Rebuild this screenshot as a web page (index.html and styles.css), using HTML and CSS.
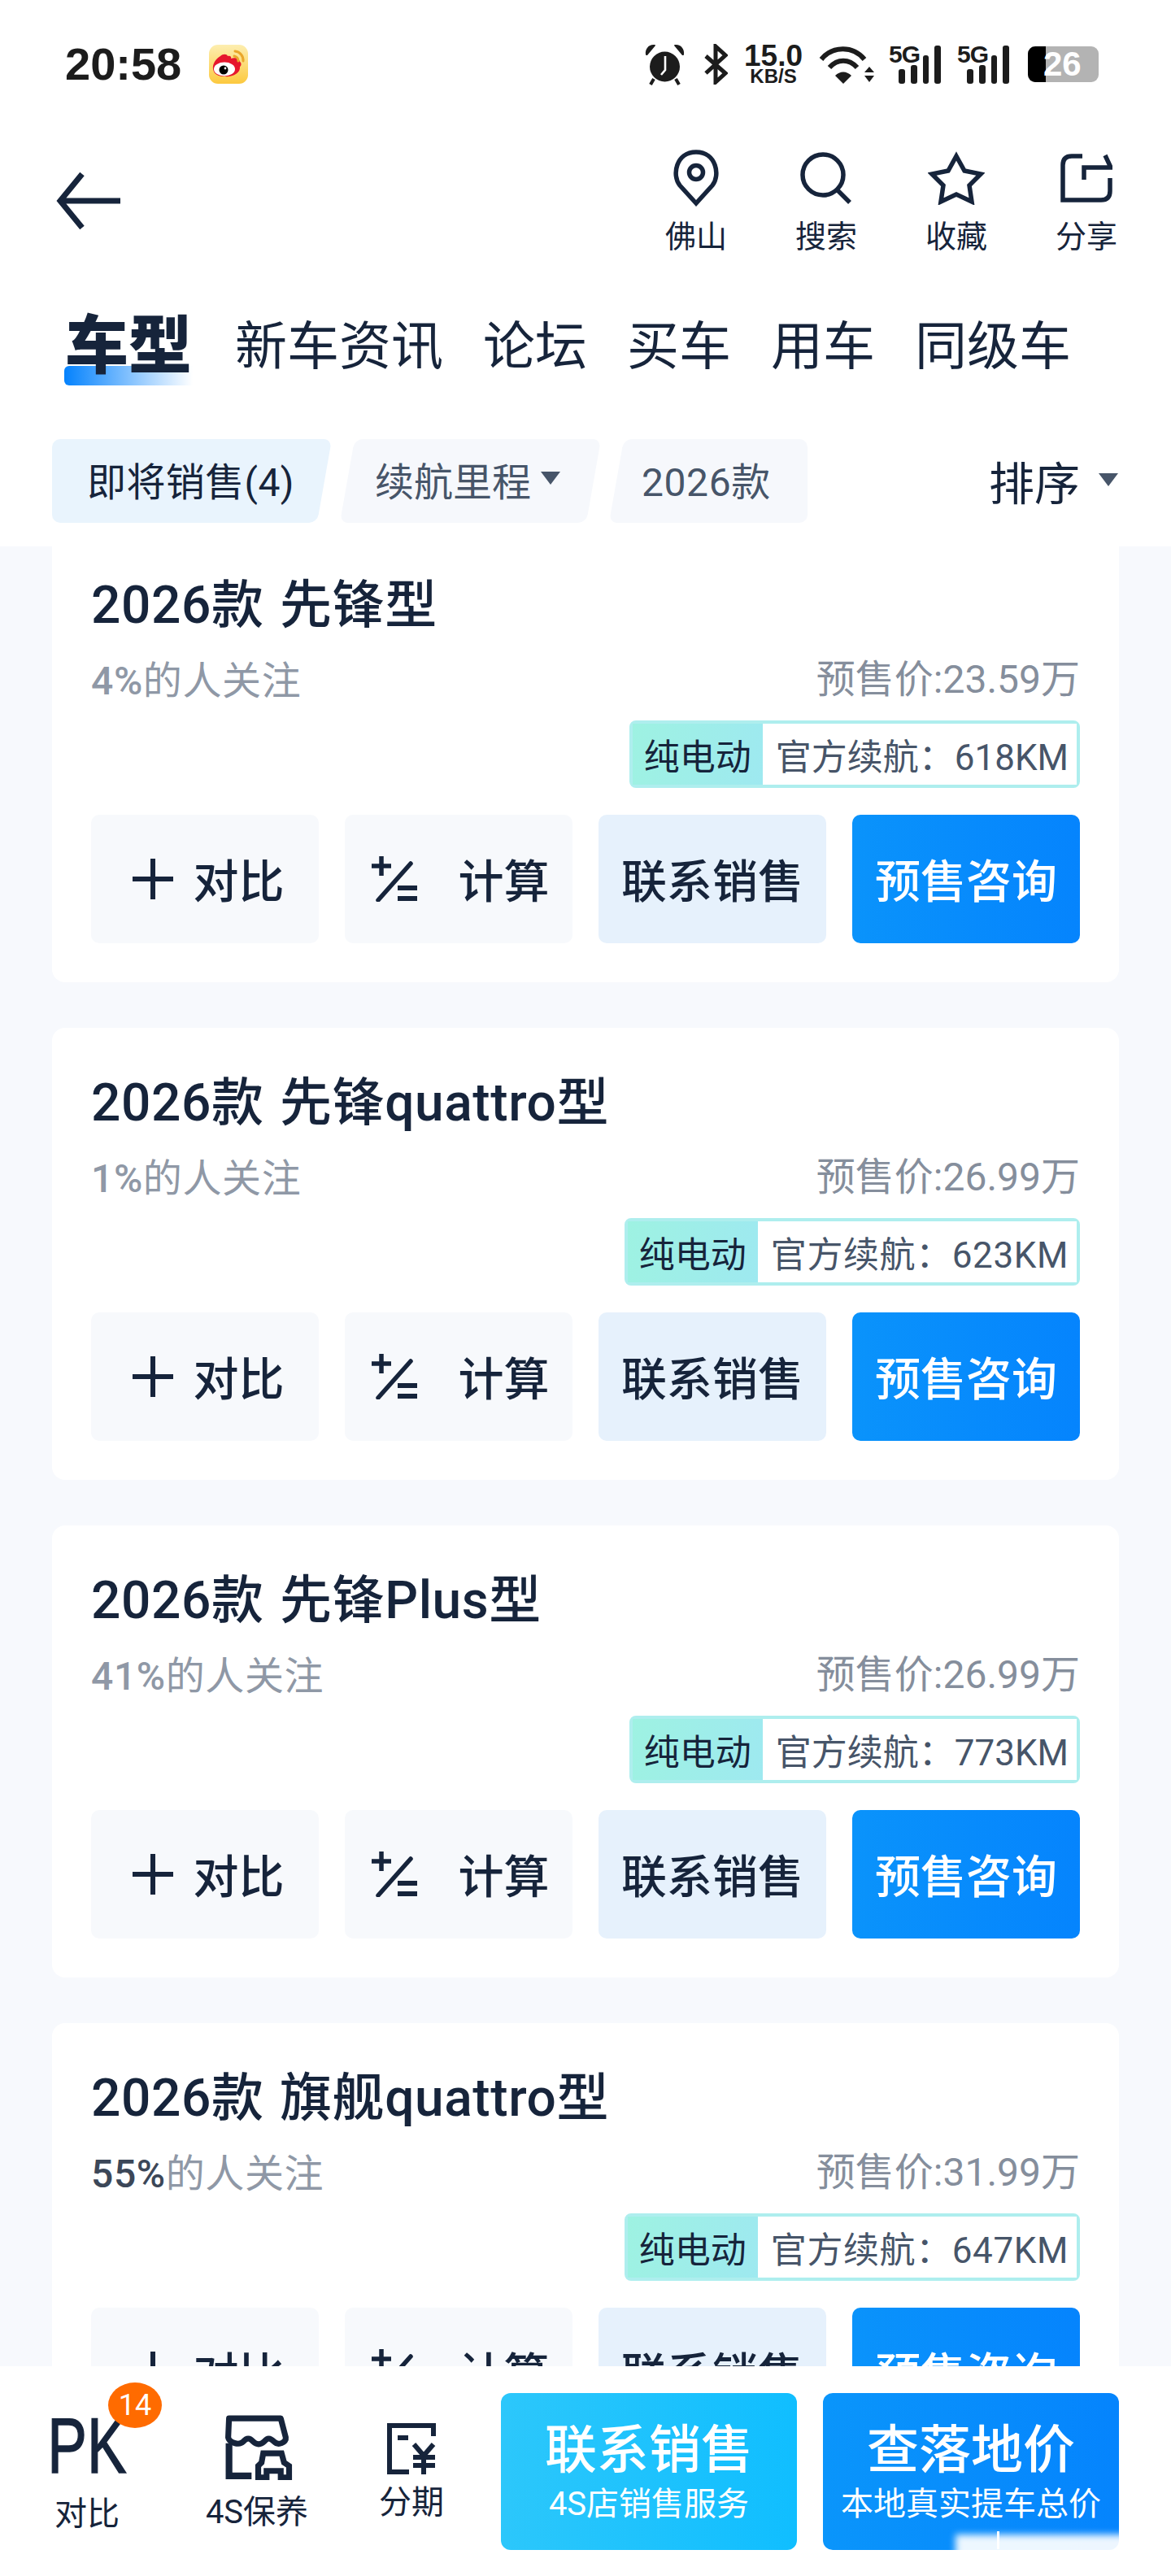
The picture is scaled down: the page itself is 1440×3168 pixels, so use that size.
FILE: index.html
```html
<!DOCTYPE html>
<html lang="zh-CN">
<head>
<meta charset="utf-8">
<title>车型</title>
<link rel="stylesheet" href="styles.css">
</head>
<body>
<div class="app">
  <header class="top">
    <div class="status">
      <div class="status-left">
        <span class="time">20:58</span>
        <svg class="weibo" viewBox="0 0 48 48">
          <defs><linearGradient id="wb" x1="0" y1="0" x2="0" y2="1"><stop offset="0" stop-color="#fdeeb0"/><stop offset="1" stop-color="#fcc93f"/></linearGradient></defs>
          <rect width="48" height="48" rx="11" fill="url(#wb)"/>
          <path d="M5 30C4 23 9 17 14 14c3-3 8-3 9 0 3-1 5 1 4 3 5-2 10 0 11 4 2 1 2 5 0 6 1 8-9 13-19 12C11 39 6 36 5 30Z" fill="#e6162d"/>
          <ellipse cx="19" cy="30" rx="13" ry="8.5" fill="#fff"/>
          <circle cx="18" cy="31" r="5.5" fill="#000"/>
          <circle cx="20" cy="29" r="1.4" fill="#fff"/>
          <path d="M32 8a11 11 0 0 1 10 12M31 14a6 6 0 0 1 5 6" fill="none" stroke="#eaa72c" stroke-width="3" stroke-linecap="round"/>
        </svg>
      </div>
      <div class="status-right">
        <svg class="st-alarm" viewBox="0 0 49 52">
          <circle cx="24.500" cy="29" r="18.500" fill="#1c1c1c"/>
          <path d="M11 44l-4 7M38 44l4 7" stroke="#1c1c1c" stroke-width="4"/>
          <path d="M1 14C0 7 5 1 12 2c1 0 1 1 1 1L3 15c-1 0-2 0-2-1ZM48 14c1-7-4-13-11-12-1 0-1 1-1 1L46 15c1 0 2 0 2-1Z" fill="#1c1c1c"/>
          <path d="M25 16V33L20 39" fill="none" stroke="#fff" stroke-width="2.600"/>
        </svg>
        <svg class="st-bt" viewBox="0 0 30 50"><path d="M3 15L27 36 15 47V3L27 14 3 36" fill="none" stroke="#1c1c1c" stroke-width="5"/></svg>
        <div class="st-speed"><span class="st-speed-num">15.0</span><span class="st-speed-unit">KB/S</span></div>
        <svg class="st-wifi" viewBox="0 0 68 48">
          <g fill="none" stroke="#1c1c1c" stroke-width="6">
            <path d="M3 18C17 1 42 1 56 18"/><path d="M13 28C23 17 37 17 47 28"/>
          </g>
          <path d="M20 38C26 32 34 32 40 38L30 48Z" fill="#1c1c1c"/>
          <path d="M56 34L62 27 68 34ZM56 38L62 46 68 38Z" fill="#1c1c1c"/>
        </svg>
        <div class="st-signal">
          <span class="st-5g">5G</span>
          <i class="bar bar-1"></i><i class="bar bar-2"></i><i class="bar bar-3"></i><i class="bar bar-4"></i>
        </div>
        <div class="st-signal">
          <span class="st-5g">5G</span>
          <i class="bar bar-1"></i><i class="bar bar-2"></i><i class="bar bar-3"></i><i class="bar bar-4"></i>
        </div>
        <div class="st-batt"><span>26</span></div>
      </div>
    </div>

    <nav class="nav">
      <svg class="back" viewBox="0 0 80 72"><path d="M32 3L5 36 32 69M5 36H79" fill="none" stroke="#16243b" stroke-width="7"/></svg>
      <div class="nav-actions">
        <div class="nav-item">
          <div class="nav-icon"><svg width="58" height="70" viewBox="0 0 58 70"><path d="M29 66L9 44C-1 32 4 3 29 3S59 32 49 44Z" fill="none" stroke="#16243b" stroke-width="5.500"/><circle cx="29" cy="28" r="8.500" fill="none" stroke="#16243b" stroke-width="5.500"/></svg></div>
          <span>佛山</span>
        </div>
        <div class="nav-item">
          <div class="nav-icon"><svg width="64" height="64" viewBox="0 0 64 64"><circle cx="28" cy="28" r="25" fill="none" stroke="#16243b" stroke-width="5.500"/><path d="M46 47L61 62" stroke="#16243b" stroke-width="5.500"/></svg></div>
          <span>搜索</span>
        </div>
        <div class="nav-item">
          <div class="nav-icon"><svg width="70" height="66" viewBox="0 0 70 66"><path d="M35 6L45 24 65 28 51 42 54 62 35 53 16 62 19 42 5 28 25 24Z" fill="none" stroke="#16243b" stroke-width="5.500"/></svg></div>
          <span>收藏</span>
        </div>
        <div class="nav-item">
          <div class="nav-icon"><svg width="64" height="60" viewBox="0 0 64 60"><path d="M27 3H14Q3 3 3 14V57H50Q61 57 61 46V30M29 32V17H62L55 2" fill="none" stroke="#16243b" stroke-width="5.500"/></svg></div>
          <span>分享</span>
        </div>
      </div>
    </nav>

    <div class="tabs">
      <div class="tab tab-active"><i class="tab-line"></i><span>车型</span></div>
      <div class="tab">新车资讯</div>
      <div class="tab">论坛</div>
      <div class="tab">买车</div>
      <div class="tab">用车</div>
      <div class="tab">同级车</div>
    </div>

    <div class="filters">
      <div class="chips">
        <div class="chip chip-first chip-on">即将销售(4)</div>
        <div class="chip chip-mid">续航里程<i class="tri tri-chip"></i></div>
        <div class="chip chip-last">2026款</div>
      </div>
      <div class="sort">排序<i class="tri tri-sort"></i></div>
    </div>
  </header>

  <main class="list">
    <article class="card">
      <h2 class="card-title">2026款 先锋型</h2>
      <div class="card-meta"><span class="attn"><b>4%</b>的人关注</span><span class="price">预售价:23.59万</span></div>
      <div class="tag"><span class="tag-kind">纯电动</span><span class="tag-range">官方续航：618KM</span></div>
      <div class="actions">
        <div class="btn btn-soft btn-plus"><svg class="ic-plus" viewBox="0 0 50 50"><path d="M25 0V50M0 25H50" stroke="#16243b" stroke-width="6"/></svg>对比</div>
        <div class="btn btn-soft btn-calc"><svg class="ic-calc" viewBox="0 0 56 56"><path d="M12 0V24M0 12H24" stroke="#16243b" stroke-width="5.500"/><path d="M48 9L8 54" stroke="#16243b" stroke-width="5.500" stroke-linecap="round"/><path d="M32 39H56M32 52H56" stroke="#16243b" stroke-width="6"/></svg>计算</div>
        <div class="btn btn-light">联系销售</div>
        <div class="btn btn-primary">预售咨询</div>
      </div>
    </article>

    <article class="card">
      <h2 class="card-title">2026款 先锋quattro型</h2>
      <div class="card-meta"><span class="attn"><b>1%</b>的人关注</span><span class="price">预售价:26.99万</span></div>
      <div class="tag tag-wide"><span class="tag-kind">纯电动</span><span class="tag-range">官方续航：623KM</span></div>
      <div class="actions">
        <div class="btn btn-soft btn-plus"><svg class="ic-plus" viewBox="0 0 50 50"><path d="M25 0V50M0 25H50" stroke="#16243b" stroke-width="6"/></svg>对比</div>
        <div class="btn btn-soft btn-calc"><svg class="ic-calc" viewBox="0 0 56 56"><path d="M12 0V24M0 12H24" stroke="#16243b" stroke-width="5.500"/><path d="M48 9L8 54" stroke="#16243b" stroke-width="5.500" stroke-linecap="round"/><path d="M32 39H56M32 52H56" stroke="#16243b" stroke-width="6"/></svg>计算</div>
        <div class="btn btn-light">联系销售</div>
        <div class="btn btn-primary">预售咨询</div>
      </div>
    </article>

    <article class="card">
      <h2 class="card-title">2026款 先锋Plus型</h2>
      <div class="card-meta"><span class="attn"><b>41%</b>的人关注</span><span class="price">预售价:26.99万</span></div>
      <div class="tag"><span class="tag-kind">纯电动</span><span class="tag-range">官方续航：773KM</span></div>
      <div class="actions">
        <div class="btn btn-soft btn-plus"><svg class="ic-plus" viewBox="0 0 50 50"><path d="M25 0V50M0 25H50" stroke="#16243b" stroke-width="6"/></svg>对比</div>
        <div class="btn btn-soft btn-calc"><svg class="ic-calc" viewBox="0 0 56 56"><path d="M12 0V24M0 12H24" stroke="#16243b" stroke-width="5.500"/><path d="M48 9L8 54" stroke="#16243b" stroke-width="5.500" stroke-linecap="round"/><path d="M32 39H56M32 52H56" stroke="#16243b" stroke-width="6"/></svg>计算</div>
        <div class="btn btn-light">联系销售</div>
        <div class="btn btn-primary">预售咨询</div>
      </div>
    </article>

    <article class="card">
      <h2 class="card-title">2026款 旗舰quattro型</h2>
      <div class="card-meta"><span class="attn"><b class="attn-hot">55%</b>的人关注</span><span class="price">预售价:31.99万</span></div>
      <div class="tag tag-wide"><span class="tag-kind">纯电动</span><span class="tag-range">官方续航：647KM</span></div>
      <div class="actions">
        <div class="btn btn-soft btn-plus"><svg class="ic-plus" viewBox="0 0 50 50"><path d="M25 0V50M0 25H50" stroke="#16243b" stroke-width="6"/></svg>对比</div>
        <div class="btn btn-soft btn-calc"><svg class="ic-calc" viewBox="0 0 56 56"><path d="M12 0V24M0 12H24" stroke="#16243b" stroke-width="5.500"/><path d="M48 9L8 54" stroke="#16243b" stroke-width="5.500" stroke-linecap="round"/><path d="M32 39H56M32 52H56" stroke="#16243b" stroke-width="6"/></svg>计算</div>
        <div class="btn btn-light">联系销售</div>
        <div class="btn btn-primary">预售咨询</div>
      </div>
    </article>
  </main>

  <footer class="bottom">
    <div class="b-item b-pk">
      <span class="pk-mark">PK</span>
      <span class="pk-badge">14</span>
      <span class="b-label">对比</span>
    </div>
    <div class="b-item b-store">
      <svg class="ic-store" viewBox="0 0 85 78">
        <path d="M9 4H71L77 27c1 6-9 10-14 5-5-5-8-5-12 0-4 4-9 4-13 0-4-5-8-5-12 0-5 5-17 1-18-5Z" fill="none" stroke="#16243b" stroke-width="7" stroke-linejoin="round"/>
        <path d="M9 34V73H36" fill="none" stroke="#16243b" stroke-width="8"/>
        <path d="M50 46H72L75 57 81 61V75H71V67H54V75H44V61L48 57Z" fill="none" stroke="#16243b" stroke-width="7"/>
      </svg>
      <span class="b-label">4S保养</span>
    </div>
    <div class="b-item b-loan">
      <svg class="ic-loan" viewBox="0 0 60 63">
        <path d="M27 60H3V3H57V16" fill="none" stroke="#16243b" stroke-width="6"/>
        <path d="M13 18H26" stroke="#16243b" stroke-width="6"/>
        <path d="M33 26L45 40 57 26M32 42H59M32 52H59M45 40V63" fill="none" stroke="#16243b" stroke-width="6"/>
      </svg>
      <span class="b-label">分期</span>
    </div>
    <div class="b-cta b-cta-sky"><strong>联系销售</strong><span>4S店销售服务</span></div>
    <div class="b-cta b-cta-blue"><strong>查落地价</strong><span>本地真实提车总价</span></div>
    <div class="ghost"></div>
    <div class="ghost-mark"></div>
  </footer>
</div>
</body>
</html>
```
FILE: styles.css
```css
* { box-sizing: border-box; }
html, body { margin: 0; padding: 0; }
body {
  width: 1440px;
  height: 3168px;
  overflow: hidden;
  background: #fff;
  color: #16243b;
  font-family: Roboto, "Noto Sans CJK SC", sans-serif;
}
.app { width: 1440px; height: 3168px; display: flex; flex-direction: column; overflow: hidden; }

/* top */
.top { height: 672px; flex: none; background: #fff; }
.status { height: 158px; display: flex; justify-content: space-between; align-items: center; padding: 0 89px 0 80px; }
.status-left { display: flex; align-items: center; gap: 34px; }
.time { font: 700 56px/1 "Liberation Sans", sans-serif; color: #1c1c1c; }
.weibo { width: 48px; height: 48px; display: block; }
.status-right { display: flex; align-items: center; gap: 20px; color: #1c1c1c; }
.st-alarm { width: 49px; height: 52px; margin-right: 3px; }
.st-bt { width: 30px; height: 50px; }
.st-speed { width: 72px; display: flex; flex-direction: column; align-items: center; font-family: "Liberation Sans", sans-serif; font-weight: 700; }
.st-speed-num { font-size: 37px; line-height: 30px; }
.st-speed-unit { font-size: 24px; line-height: 20px; }
.st-wifi { width: 68px; height: 48px; margin-right: -2px; }
.st-signal { width: 64px; height: 48px; display: flex; align-items: flex-end; gap: 7px; padding-left: 12px; position: relative; }
.st-5g { position: absolute; left: 0; top: 0; font: 700 30px/24px "Liberation Sans Narrow", "Liberation Sans", sans-serif; letter-spacing: -1px; }
.bar { width: 8px; background: #1c1c1c; border-radius: 3px; display: block; }
.bar-1 { height: 18px; }
.bar-2 { height: 23px; }
.bar-3 { height: 35px; }
.bar-4 { height: 47px; }
.st-batt {
  width: 87px; height: 44px; margin-left: 3px; border-radius: 9px;
  background: linear-gradient(90deg, #000 22px, #b3b3b3 22px);
  color: #fff; display: flex; align-items: center; padding-left: 19px;
  font: 700 42px/1 "Liberation Sans", sans-serif;
}

.nav { height: 172px; display: flex; justify-content: space-between; padding: 0 24px 0 69px; }
.back { width: 80px; height: 72px; margin-top: 53px; display: block; }
.nav-actions { display: flex; padding-top: 25px; }
.nav-item { width: 160px; display: flex; flex-direction: column; align-items: center; gap: 10px; font-size: 38px; line-height: 52px; }
.nav-icon { height: 72px; display: flex; align-items: center; justify-content: center; }
.nav-icon svg { display: block; }

.tabs { height: 190px; display: flex; align-items: center; gap: 49px; padding: 3px 0 0 80px; font-size: 64px; }
.tab { line-height: 90px; white-space: nowrap; }
.tab-active { position: relative; font-size: 78px; font-weight: 900; margin-right: 4px; }
.tab-active span { position: relative; }
.tab-line {
  position: absolute; left: -1px; right: -1px; top: 68px; height: 24px; border-radius: 6px 0 0 6px;
  background: linear-gradient(90deg, #0482fd, rgba(4, 130, 253, 0));
}

.filters { margin-top: 20px; height: 103px; display: flex; justify-content: space-between; align-items: center; padding: 0 65px 0 64px; }
.chips { display: flex; gap: 28px; height: 103px; }
.chip {
  position: relative; z-index: 0; display: flex; align-items: center; font-size: 48px; color: #475569; white-space: nowrap;
  padding-bottom: 6px;
}
.chip::before, .chip::after { content: ""; position: absolute; top: 0; bottom: 0; z-index: -1; border-radius: 10px; }
.chip { --chip: #f6f8fc; }
.chip::before { left: 0; right: 0; background: var(--chip); transform: skewX(-10deg); }
.chip-on { --chip: #e9f4fd; color: #16243b; }
.chip-first { padding-left: 43px; padding-right: 37px; letter-spacing: .4px; }
.chip-first::before { left: 30px; }
.chip-first::after { left: 0; width: 70px; background: var(--chip); }
.chip-mid { padding-left: 34px; padding-right: 41px; }
.chip-last { padding-left: 31px; padding-right: 45px; letter-spacing: .6px; }
.chip-last::before { right: 30px; }
.chip-last::after { right: 0; width: 70px; background: var(--chip); }
.tri { display: block; width: 0; height: 0; border-left: 12px solid transparent; border-right: 12px solid transparent; border-top: 16px solid #475569; }
.tri-chip { margin-left: 12px; margin-top: -2px; }
.sort { display: flex; align-items: center; font-size: 56px; padding-bottom: 3px; }
.tri-sort { margin-left: 23px; }

/* list */
.list { flex: 1; min-height: 0; overflow: hidden; background: #f7f9fd; display: flex; flex-direction: column; gap: 56px; padding: 0 64px; }
.card { flex: none; height: 556px; border-radius: 16px; background: #fff; padding: 49px 48px 48px; display: flex; flex-direction: column; }
.card:first-child { margin-top: -20px; }
.card-title { margin: 0; font-size: 64px; line-height: 88px; font-weight: 500; letter-spacing: .6px; word-spacing: 3px; }
.card-meta { margin-top: 15px; display: flex; justify-content: space-between; align-items: flex-start; line-height: 64px; white-space: nowrap; }
.attn { font-size: 48px; color: #8f98a6; padding-top: 2px; letter-spacing: .6px; }
.attn b { font-weight: 500; }
.attn .attn-hot { color: #3c4758; }
.price { font-size: 48px; color: #858e9c; }
.tag { align-self: flex-end; margin-top: 16px; height: 83px; border: 4px solid #aeeeee; border-radius: 8px; display: flex; align-items: stretch; font-size: 44px; white-space: nowrap; }
.tag-kind { display: flex; align-items: center; padding: 0 14px; color: #16243b; background: linear-gradient(100deg, #9ef2e2, #9ee9f0); }
.tag-range { display: flex; align-items: center; padding: 0 10px 0 16px; color: #475569; background: #fff; }
.tag-wide .tag-range { letter-spacing: .6px; }
.actions { margin-top: 33px; display: grid; grid-template-columns: repeat(4, 280px); gap: 32px; }
.btn { height: 158px; border-radius: 10px; display: flex; align-items: center; justify-content: center; font-size: 56px; font-weight: 500; white-space: nowrap; padding-bottom: 3px; }
.btn-soft { background: #f7f9fc; gap: 27px; }
.btn-plus { padding-left: 8px; gap: 25px; }
.btn-calc { gap: 51px; padding-left: 4px; }
.btn-light { background: #e6f1fc; }
.btn-primary { background: linear-gradient(90deg, #0a93fb, #0584fd); color: #fff; }
.ic-plus { width: 50px; height: 50px; display: block; margin-top: 3px; }
.ic-calc { width: 56px; height: 56px; display: block; margin-top: 3px; }

/* bottom bar */
.bottom { position: relative; flex: none; height: 258px; background: #fff; display: flex; padding-left: 40px; }
.b-item { display: flex; flex-direction: column; align-items: center; font-size: 40px; }
.b-label { line-height: 48px; white-space: nowrap; }
.b-pk { position: relative; width: 134px; padding-top: 54px; margin-right: 62px; }
.pk-mark {
  display: block; height: 88px; line-height: 88px; margin-bottom: 16px; color: #16243b;
  font-family: "Liberation Sans Narrow", "Liberation Sans", sans-serif; font-size: 96px; font-weight: 400;
  transform: scaleX(.76); -webkit-text-stroke: 1.5px #16243b;
}
.pk-badge {
  position: absolute; left: 93px; top: 20px; width: 66px; height: 56px; border-radius: 50%;
  background: #ff6b00; color: #fff; font-size: 36px; line-height: 56px; text-align: center;
}
.b-store { width: 160px; padding-top: 60px; margin-right: 50px; }
.ic-store { width: 88px; height: 80px; margin-bottom: 16px; display: block; }
.b-loan { width: 120px; padding-top: 70px; margin-right: 50px; }
.ic-loan { width: 60px; height: 63px; margin-bottom: 11px; display: block; }
.b-cta {
  width: 364px; height: 193px; margin-top: 33px; border-radius: 12px; color: #fff;
  display: flex; flex-direction: column; align-items: center; white-space: nowrap;
}
.b-cta strong { margin-top: 34px; font-size: 64px; line-height: 74px; font-weight: 500; }
.b-cta span { font-size: 40px; line-height: 52px; margin-top: 3px; }
.b-cta-sky { background: linear-gradient(90deg, #2cc7fb, #10beff); margin-right: 32px; }
.b-cta-blue { background: linear-gradient(90deg, #0a95fb, #0584fd); }
.ghost {
  position: absolute; left: 1175px; top: 207px; width: 235px; height: 36px;
  background: rgba(255, 255, 255, 0.93); filter: blur(4px);
}
.ghost-mark { position: absolute; left: 1226px; top: 203px; width: 3px; height: 22px; background: #fff; }
```
